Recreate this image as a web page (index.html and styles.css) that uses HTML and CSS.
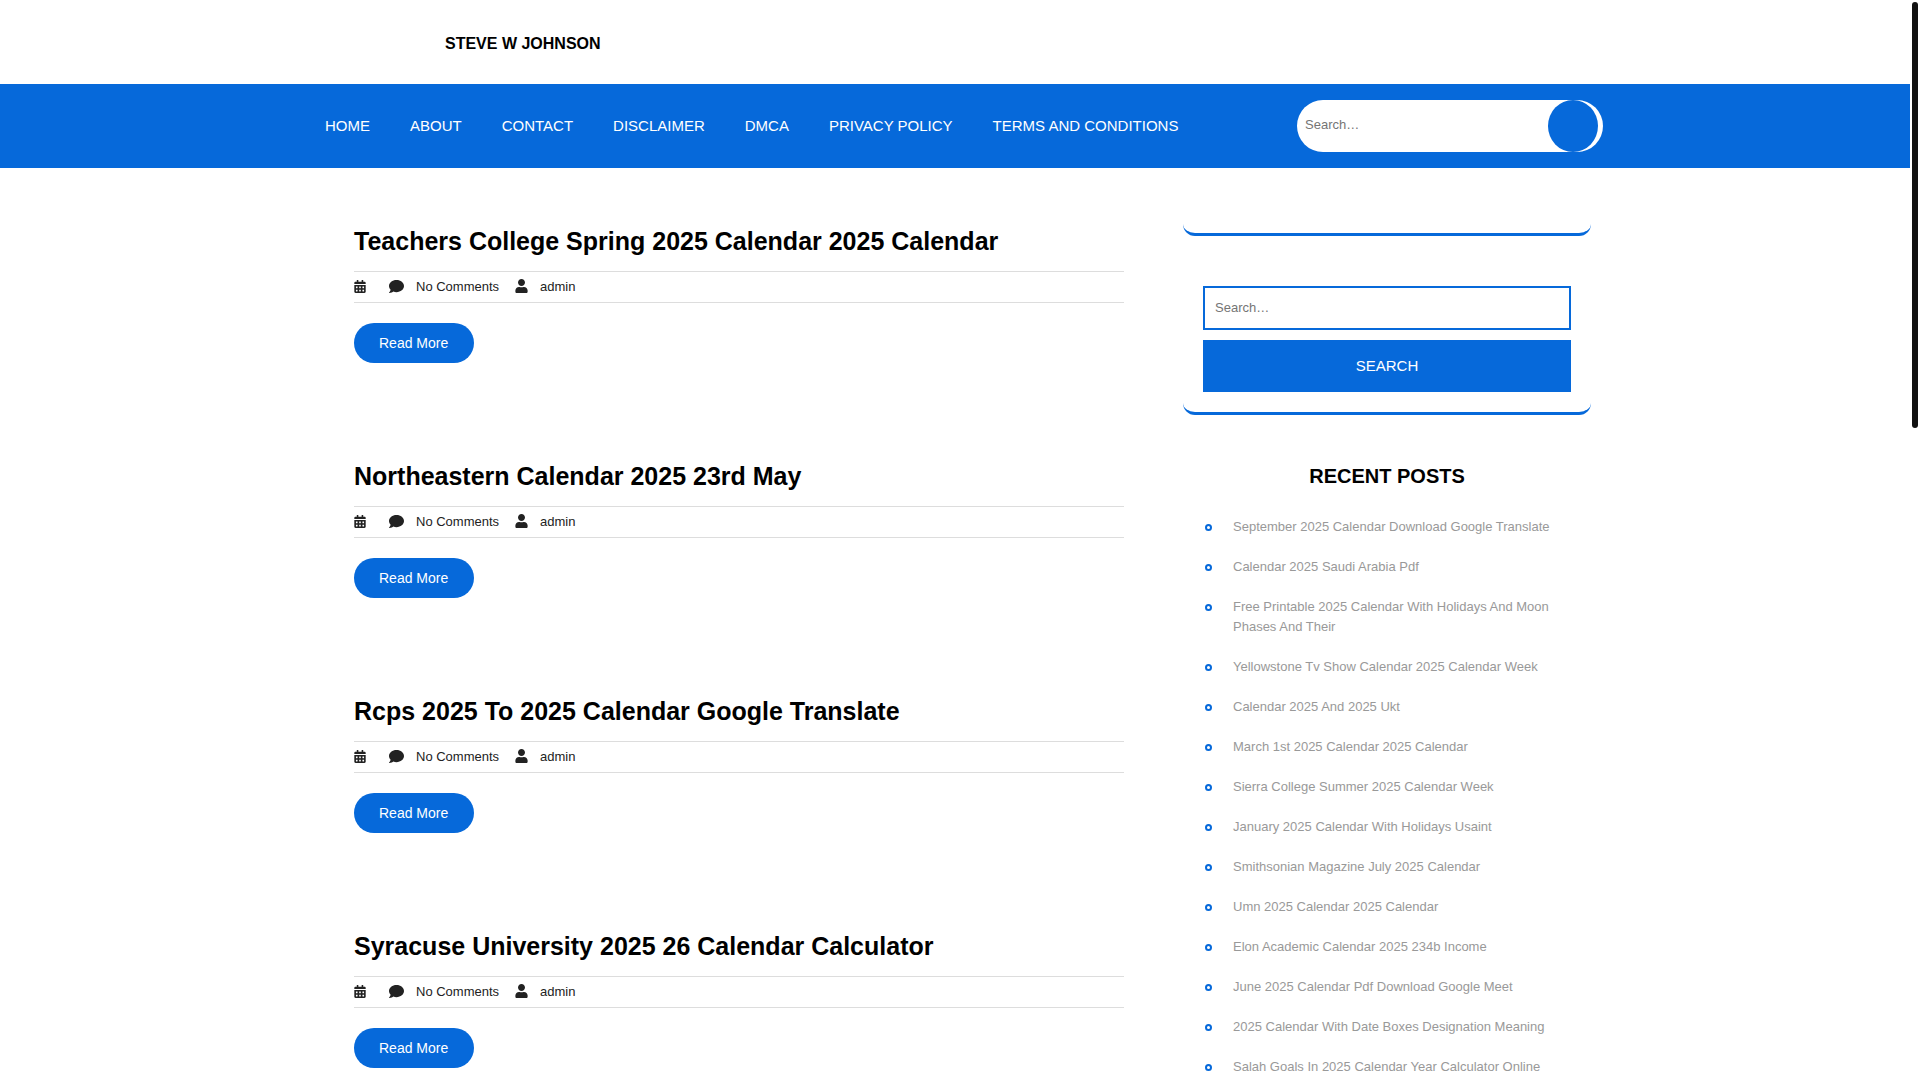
FILE: index.html
```html
<!DOCTYPE html>
<html lang="en">
<head>
    <meta charset="UTF-8">
    <meta name="viewport" content="width=device-width, initial-scale=1.0">
    <title>Steve W Johnson</title>
    <link rel="stylesheet" href="styles.css">
</head>
<body>
    <!-- shared icons -->
    <svg class="icon-defs" aria-hidden="true">
        <symbol id="icon-calendar" viewBox="0 0 448 512">
            <path d="M0 464c0 26.500 21.500 48 48 48h352c26.500 0 48-21.500 48-48V192H0v272zm320-196c0-6.600 5.400-12 12-12h40c6.600 0 12 5.400 12 12v40c0 6.600-5.400 12-12 12h-40c-6.600 0-12-5.400-12-12v-40zm0 128c0-6.600 5.400-12 12-12h40c6.600 0 12 5.400 12 12v40c0 6.600-5.400 12-12 12h-40c-6.600 0-12-5.400-12-12v-40zM192 268c0-6.600 5.400-12 12-12h40c6.600 0 12 5.400 12 12v40c0 6.600-5.400 12-12 12h-40c-6.600 0-12-5.400-12-12v-40zm0 128c0-6.600 5.400-12 12-12h40c6.600 0 12 5.400 12 12v40c0 6.600-5.400 12-12 12h-40c-6.600 0-12-5.400-12-12v-40zM64 268c0-6.600 5.400-12 12-12h40c6.600 0 12 5.400 12 12v40c0 6.600-5.400 12-12 12H76c-6.600 0-12-5.400-12-12v-40zm0 128c0-6.600 5.400-12 12-12h40c6.600 0 12 5.400 12 12v40c0 6.600-5.400 12-12 12H76c-6.600 0-12-5.400-12-12v-40zM400 64h-48V16c0-8.800-7.200-16-16-16h-32c-8.800 0-16 7.200-16 16v48H160V16c0-8.800-7.200-16-16-16h-32c-8.800 0-16 7.200-16 16v48H48C21.500 64 0 85.500 0 112v48h448v-48c0-26.500-21.500-48-48-48z"/>
        </symbol>
        <symbol id="icon-comment" viewBox="0 0 512 512">
            <path d="M256 32C114.600 32 0 125.100 0 240c0 49.600 21.400 95 57 130.700C44.500 421.100 2.700 466 2.200 466.500c-2.200 2.300-2.800 5.700-1.500 8.700S4.800 480 8 480c66.300 0 116-31.800 140.600-51.400 32.700 12.300 69 19.400 107.400 19.400 141.400 0 256-93.100 256-208S397.400 32 256 32z"/>
        </symbol>
        <symbol id="icon-user" viewBox="0 0 448 512">
            <path d="M224 256c70.700 0 128-57.300 128-128S294.700 0 224 0 96 57.300 96 128s57.300 128 128 128zm89.600 32h-16.700c-22.200 10.200-46.900 16-72.900 16s-50.600-5.800-72.900-16h-16.700C60.200 288 0 348.200 0 422.400V464c0 26.500 21.500 48 48 48h352c26.500 0 48-21.500 48-48v-41.600c0-74.200-60.200-134.400-134.400-134.400z"/>
        </symbol>
    </svg>

    <div class="page">
        <header>
            <div class="container top-bar">
                <a href="#" class="site-title">STEVE W JOHNSON</a>
            </div>
            <div class="menu-bar">
                <div class="container menu-row">
                    <nav class="main-menu">
                        <a href="#">HOME</a>
                        <a href="#">ABOUT</a>
                        <a href="#">CONTACT</a>
                        <a href="#">DISCLAIMER</a>
                        <a href="#">DMCA</a>
                        <a href="#">PRIVACY POLICY</a>
                        <a href="#">TERMS AND CONDITIONS</a>
                    </nav>
                    <form class="header-search">
                        <input type="search" placeholder="Search…" aria-label="Search for">
                        <button type="submit" aria-label="Search"></button>
                    </form>
                </div>
            </div>
        </header>

        <div class="container content">
            <main>
                <article class="post">
                    <h2><a href="#">Teachers College Spring 2025 Calendar 2025 Calendar</a></h2>
                    <div class="post-meta">
                        <svg class="icon calendar"><use href="#icon-calendar"/></svg>
                        <svg class="icon comment"><use href="#icon-comment"/></svg>
                        <span class="comments">No Comments</span>
                        <svg class="icon user"><use href="#icon-user"/></svg>
                        <a href="#">admin</a>
                    </div>
                    <a href="#" class="read-more">Read More</a>
                </article>
                <article class="post">
                    <h2><a href="#">Northeastern Calendar 2025 23rd May</a></h2>
                    <div class="post-meta">
                        <svg class="icon calendar"><use href="#icon-calendar"/></svg>
                        <svg class="icon comment"><use href="#icon-comment"/></svg>
                        <span class="comments">No Comments</span>
                        <svg class="icon user"><use href="#icon-user"/></svg>
                        <a href="#">admin</a>
                    </div>
                    <a href="#" class="read-more">Read More</a>
                </article>
                <article class="post">
                    <h2><a href="#">Rcps 2025 To 2025 Calendar Google Translate</a></h2>
                    <div class="post-meta">
                        <svg class="icon calendar"><use href="#icon-calendar"/></svg>
                        <svg class="icon comment"><use href="#icon-comment"/></svg>
                        <span class="comments">No Comments</span>
                        <svg class="icon user"><use href="#icon-user"/></svg>
                        <a href="#">admin</a>
                    </div>
                    <a href="#" class="read-more">Read More</a>
                </article>
                <article class="post">
                    <h2><a href="#">Syracuse University 2025 26 Calendar Calculator</a></h2>
                    <div class="post-meta">
                        <svg class="icon calendar"><use href="#icon-calendar"/></svg>
                        <svg class="icon comment"><use href="#icon-comment"/></svg>
                        <span class="comments">No Comments</span>
                        <svg class="icon user"><use href="#icon-user"/></svg>
                        <a href="#">admin</a>
                    </div>
                    <a href="#" class="read-more">Read More</a>
                </article>
            </main>

            <aside class="sidebar">
                <section class="widget"></section>
                <section class="widget">
                    <form class="widget-search">
                        <input type="search" placeholder="Search…" aria-label="Search for">
                        <button type="submit">SEARCH</button>
                    </form>
                </section>
                <section class="widget">
                    <h3>RECENT POSTS</h3>
                    <ul>
                        <li><a href="#">September 2025 Calendar Download Google Translate</a></li>
                        <li><a href="#">Calendar 2025 Saudi Arabia Pdf</a></li>
                        <li><a href="#">Free Printable 2025 Calendar With Holidays And Moon Phases And Their</a></li>
                        <li><a href="#">Yellowstone Tv Show Calendar 2025 Calendar Week</a></li>
                        <li><a href="#">Calendar 2025 And 2025 Ukt</a></li>
                        <li><a href="#">March 1st 2025 Calendar 2025 Calendar</a></li>
                        <li><a href="#">Sierra College Summer 2025 Calendar Week</a></li>
                        <li><a href="#">January 2025 Calendar With Holidays Usaint</a></li>
                        <li><a href="#">Smithsonian Magazine July 2025 Calendar</a></li>
                        <li><a href="#">Umn 2025 Calendar 2025 Calendar</a></li>
                        <li><a href="#">Elon Academic Calendar 2025 234b Income</a></li>
                        <li><a href="#">June 2025 Calendar Pdf Download Google Meet</a></li>
                        <li><a href="#">2025 Calendar With Date Boxes Designation Meaning</a></li>
                        <li><a href="#">Salah Goals In 2025 Calendar Year Calculator Online</a></li>
                    </ul>
                </section>
            </aside>
        </div>
    </div>

    <div class="scroll-track">
        <div class="scroll-thumb"></div>
    </div>
</body>
</html>
```
FILE: styles.css
```css
*,
*::before {
    box-sizing: border-box;
}

body {
    display: flex;
    height: 100vh;
    margin: 0;
    overflow: hidden;
    background-color: #fff;
    color: #222;
    font-family: "Liberation Sans", Arial, sans-serif;
    font-size: 13px;
}

a {
    color: inherit;
    text-decoration: none;
}

input,
button {
    font-family: inherit;
    border: none;
    border-radius: 0;
    margin: 0;
}

input::placeholder {
    color: #757575;
}

button {
    background-color: #0669da;
    color: #fff;
    font-size: 15px;
    cursor: pointer;
}

.icon-defs {
    display: none;
}

.page {
    flex: 1;
    min-width: 0;
    overflow: hidden;
}

.container {
    max-width: 1320px;
    margin: 0 auto;
}

/* Header */
.top-bar {
    padding: 34px 150px 30px;
}

.site-title {
    display: block;
    color: #000;
    font-size: 16px;
    font-weight: bold;
    line-height: 20px;
}

.menu-bar {
    background-color: #0669da;
    padding: 16px 0;
}

.menu-row {
    display: flex;
    justify-content: space-between;
    align-items: center;
    padding: 0 12px 0 10px;
}

.main-menu {
    display: flex;
}

.main-menu a {
    padding: 0 20px;
    color: #fff;
    font-size: 15px;
    line-height: 20px;
}

.header-search {
    display: flex;
    width: 306px;
    padding-right: 5px;
    background-color: #fff;
    border-radius: 26px;
}

.header-search input {
    flex: 1;
    min-width: 0;
    height: 50px;
    padding: 0 8px 2px;
    background: transparent;
    font-size: 13px;
}

.header-search button {
    width: 50px;
    height: 52px;
    border-radius: 50%;
}

/* Posts */
.content {
    display: grid;
    grid-template-columns: 770fr 408fr;
    gap: 59px;
    padding: 25px 24px 0 59px;
}

.post {
    padding-top: 33px;
    margin-bottom: 65px;
}

.post h2 {
    margin: 0 0 15px;
    color: #000;
    font-size: 25px;
    line-height: 30px;
}

.post-meta {
    display: flex;
    align-items: center;
    height: 32px;
    padding-bottom: 2px;
    margin-bottom: 20px;
    border-top: 1px solid #ddd;
    border-bottom: 1px solid #ddd;
}

.icon {
    height: 13px;
    fill: #222;
}

.calendar {
    width: 12px;
    margin-right: 23px;
}

.comment {
    width: 15px;
    height: 15px;
    margin-right: 12px;
}

.comments {
    margin-right: 16px;
}

.user {
    width: 13px;
    height: 14px;
    margin-right: 12px;
}

.read-more {
    display: inline-block;
    padding: 0 26px 0 25px;
    border-radius: 20px;
    background-color: #0669da;
    color: #fff;
    font-size: 14px;
    line-height: 40px;
    vertical-align: top;
}

/* Sidebar */
.widget {
    padding: 20px;
    margin-bottom: 30px;
    border-bottom: 3px solid #0669da;
    border-radius: 12px;
}

.widget-search {
    display: grid;
    gap: 10px;
}

.widget-search input {
    width: 100%;
    height: 44px;
    padding: 0 10px 2px;
    border: 2px solid #0669da;
    font-size: 13px;
}

.widget-search button {
    height: 52px;
    padding-bottom: 2px;
}

.widget h3 {
    margin: 0 0 20px;
    color: #000;
    font-size: 20px;
    line-height: 22px;
    text-align: center;
}

.widget ul {
    margin: 0;
    padding: 0;
    list-style: none;
}

.widget li {
    display: flex;
    padding: 10px 0;
    color: #999;
    line-height: 20px;
}

.widget li::before {
    content: "";
    flex: none;
    width: 7px;
    height: 7px;
    margin: 7px 21px 0 2px;
    border: 2px solid #0669da;
    border-radius: 50%;
}

/* Scroll bar */
.scroll-track {
    width: 10px;
    padding: 2px;
}

.scroll-thumb {
    height: 426px;
    border-radius: 3px;
    background-color: #111;
}
```
